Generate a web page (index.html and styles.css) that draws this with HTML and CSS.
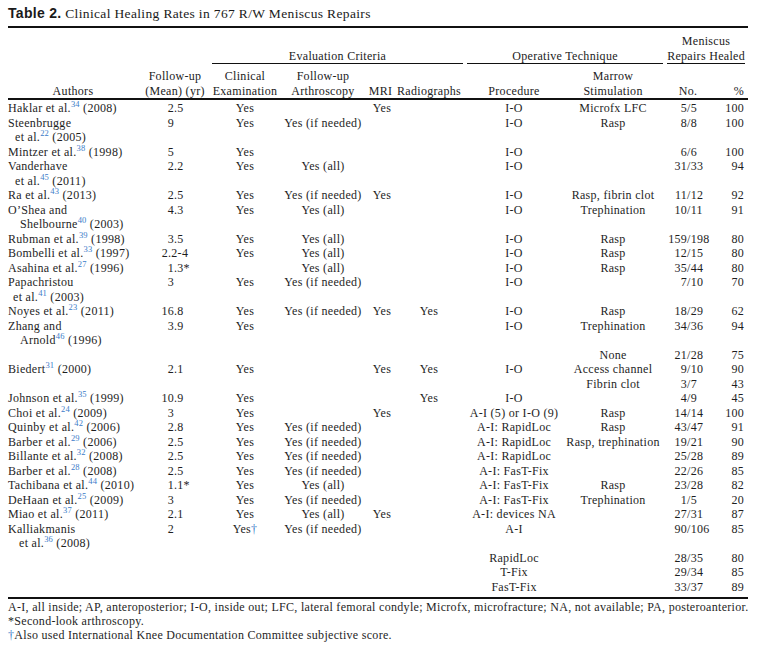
FILE: index.html
```html
<!DOCTYPE html>
<html lang="en">
<head>
<meta charset="utf-8">
<title>Table 2</title>
<link rel="stylesheet" href="styles.css">
</head>
<body>
<div class="page">
  <p class="title"><b>Table 2.</b> Clinical Healing Rates in 767 R/W Meniscus Repairs</p>
  <table class="tbl">
    <colgroup>
      <col class="c1"><col class="c2"><col class="c3"><col class="c4"><col class="c5">
      <col class="c6"><col class="c7"><col class="c8"><col class="c9"><col class="c10">
    </colgroup>
    <thead>
      <tr class="h1">
        <th></th>
        <th></th>
        <th colspan="4" class="grp"><div class="ul ul-eval">Evaluation Criteria</div></th>
        <th colspan="2" class="grp"><div class="ul ul-op">Operative Technique</div></th>
        <th colspan="2" class="grp"><div class="ul ul-men">Meniscus<br>Repairs Healed</div></th>
      </tr>
      <tr class="h2">
        <th>Authors</th>
        <th>Follow-up<br>(Mean) (yr)</th>
        <th>Clinical<br>Examination</th>
        <th>Follow-up<br>Arthroscopy</th>
        <th class="mri">MRI</th>
        <th>Radiographs</th>
        <th>Procedure</th>
        <th class="ms">Marrow<br>Stimulation</th>
        <th class="nohd">No.</th>
        <th class="pct">%</th>
      </tr>
    </thead>
    <tbody>
      <tr class="first"><td class="au">Haklar et al.<sup>34</sup> (2008)</td><td class="fu"><span class="int">2</span>.5</td><td>Yes</td><td></td><td>Yes</td><td></td><td>I-O</td><td class="ms">Microfx LFC</td><td class="no"><span class="num">5</span>/5</td><td class="pct">100</td></tr>
      <tr><td class="au">Steenbrugge<br><span class="i7">et al.<sup>22</sup> (2005)</span></td><td class="fu"><span class="int">9</span></td><td>Yes</td><td>Yes (if needed)</td><td></td><td></td><td>I-O</td><td class="ms">Rasp</td><td class="no"><span class="num">8</span>/8</td><td class="pct">100</td></tr>
      <tr><td class="au">Mintzer et al.<sup>38</sup> (1998)</td><td class="fu"><span class="int">5</span></td><td>Yes</td><td></td><td></td><td></td><td>I-O</td><td class="ms"></td><td class="no"><span class="num">6</span>/6</td><td class="pct">100</td></tr>
      <tr><td class="au">Vanderhave<br><span class="i7">et al.<sup>45</sup> (2011)</span></td><td class="fu"><span class="int">2</span>.2</td><td>Yes</td><td>Yes (all)</td><td></td><td></td><td>I-O</td><td class="ms"></td><td class="no"><span class="num">31</span>/33</td><td class="pct">94</td></tr>
      <tr><td class="au">Ra et al.<sup>43</sup> (2013)</td><td class="fu"><span class="int">2</span>.5</td><td>Yes</td><td>Yes (if needed)</td><td>Yes</td><td></td><td>I-O</td><td class="ms">Rasp, fibrin clot</td><td class="no"><span class="num">11</span>/12</td><td class="pct">92</td></tr>
      <tr><td class="au">O’Shea and<br><span class="i12">Shelbourne<sup>40</sup> (2003)</span></td><td class="fu"><span class="int">4</span>.3</td><td>Yes</td><td>Yes (all)</td><td></td><td></td><td>I-O</td><td class="ms">Trephination</td><td class="no"><span class="num">10</span>/11</td><td class="pct">91</td></tr>
      <tr><td class="au">Rubman et al.<sup>39</sup> (1998)</td><td class="fu"><span class="int">3</span>.5</td><td>Yes</td><td>Yes (all)</td><td></td><td></td><td>I-O</td><td class="ms">Rasp</td><td class="no"><span class="num">159</span>/198</td><td class="pct">80</td></tr>
      <tr><td class="au">Bombelli et al.<sup>33</sup> (1997)</td><td class="fu"><span class="int wide">2</span>.2-4</td><td>Yes</td><td>Yes (all)</td><td></td><td></td><td>I-O</td><td class="ms">Rasp</td><td class="no"><span class="num">12</span>/15</td><td class="pct">80</td></tr>
      <tr><td class="au">Asahina et al.<sup>27</sup> (1996)</td><td class="fu"><span class="int">1</span>.3*</td><td></td><td>Yes (all)</td><td></td><td></td><td>I-O</td><td class="ms">Rasp</td><td class="no"><span class="num">35</span>/44</td><td class="pct">80</td></tr>
      <tr><td class="au">Papachristou<br><span class="i5">et al.<sup>41</sup> (2003)</span></td><td class="fu"><span class="int">3</span></td><td>Yes</td><td>Yes (if needed)</td><td></td><td></td><td>I-O</td><td class="ms"></td><td class="no"><span class="num">7</span>/10</td><td class="pct">70</td></tr>
      <tr><td class="au">Noyes et al.<sup>23</sup> (2011)</td><td class="fu"><span class="int">16</span>.8</td><td>Yes</td><td>Yes (if needed)</td><td>Yes</td><td>Yes</td><td>I-O</td><td class="ms">Rasp</td><td class="no"><span class="num">18</span>/29</td><td class="pct">62</td></tr>
      <tr><td class="au">Zhang and<br><span class="i12">Arnold<sup>46</sup> (1996)</span></td><td class="fu"><span class="int">3</span>.9</td><td>Yes</td><td></td><td></td><td></td><td>I-O</td><td class="ms">Trephination</td><td class="no"><span class="num">34</span>/36</td><td class="pct">94</td></tr>
      <tr><td class="au"></td><td class="fu"></td><td></td><td></td><td></td><td></td><td></td><td class="ms">None</td><td class="no"><span class="num">21</span>/28</td><td class="pct">75</td></tr>
      <tr><td class="au">Biedert<sup>31</sup> (2000)</td><td class="fu"><span class="int">2</span>.1</td><td>Yes</td><td></td><td>Yes</td><td>Yes</td><td>I-O</td><td class="ms">Access channel</td><td class="no"><span class="num">9</span>/10</td><td class="pct">90</td></tr>
      <tr><td class="au"></td><td class="fu"></td><td></td><td></td><td></td><td></td><td></td><td class="ms">Fibrin clot</td><td class="no"><span class="num">3</span>/7</td><td class="pct">43</td></tr>
      <tr><td class="au">Johnson et al.<sup>35</sup> (1999)</td><td class="fu"><span class="int">10</span>.9</td><td>Yes</td><td></td><td></td><td>Yes</td><td>I-O</td><td class="ms"></td><td class="no"><span class="num">4</span>/9</td><td class="pct">45</td></tr>
      <tr><td class="au">Choi et al.<sup>24</sup> (2009)</td><td class="fu"><span class="int">3</span></td><td>Yes</td><td></td><td>Yes</td><td></td><td>A-I (5) or I-O (9)</td><td class="ms">Rasp</td><td class="no"><span class="num">14</span>/14</td><td class="pct">100</td></tr>
      <tr><td class="au">Quinby et al.<sup>42</sup> (2006)</td><td class="fu"><span class="int">2</span>.8</td><td>Yes</td><td>Yes (if needed)</td><td></td><td></td><td>A-I: RapidLoc</td><td class="ms">Rasp</td><td class="no"><span class="num">43</span>/47</td><td class="pct">91</td></tr>
      <tr><td class="au">Barber et al.<sup>29</sup> (2006)</td><td class="fu"><span class="int">2</span>.5</td><td>Yes</td><td>Yes (if needed)</td><td></td><td></td><td>A-I: RapidLoc</td><td class="ms">Rasp, trephination</td><td class="no"><span class="num">19</span>/21</td><td class="pct">90</td></tr>
      <tr><td class="au">Billante et al.<sup>32</sup> (2008)</td><td class="fu"><span class="int">2</span>.5</td><td>Yes</td><td>Yes (if needed)</td><td></td><td></td><td>A-I: RapidLoc</td><td class="ms"></td><td class="no"><span class="num">25</span>/28</td><td class="pct">89</td></tr>
      <tr><td class="au">Barber et al.<sup>28</sup> (2008)</td><td class="fu"><span class="int">2</span>.5</td><td>Yes</td><td>Yes (if needed)</td><td></td><td></td><td>A-I: FasT-Fix</td><td class="ms"></td><td class="no"><span class="num">22</span>/26</td><td class="pct">85</td></tr>
      <tr><td class="au">Tachibana et al.<sup>44</sup> (2010)</td><td class="fu"><span class="int">1</span>.1*</td><td>Yes</td><td>Yes (all)</td><td></td><td></td><td>A-I: FasT-Fix</td><td class="ms">Rasp</td><td class="no"><span class="num">23</span>/28</td><td class="pct">82</td></tr>
      <tr><td class="au">DeHaan et al.<sup>25</sup> (2009)</td><td class="fu"><span class="int">3</span></td><td>Yes</td><td>Yes (if needed)</td><td></td><td></td><td>A-I: FasT-Fix</td><td class="ms">Trephination</td><td class="no"><span class="num">1</span>/5</td><td class="pct">20</td></tr>
      <tr><td class="au">Miao et al.<sup>37</sup> (2011)</td><td class="fu"><span class="int">2</span>.1</td><td>Yes</td><td>Yes (all)</td><td>Yes</td><td></td><td>A-I: devices NA</td><td class="ms"></td><td class="no"><span class="num">27</span>/31</td><td class="pct">87</td></tr>
      <tr><td class="au">Kalliakmanis<br><span class="i11">et al.<sup>36</sup> (2008)</span></td><td class="fu"><span class="int">2</span></td><td>Yes<span class="dag">†</span></td><td>Yes (if needed)</td><td></td><td></td><td>A-I</td><td class="ms"></td><td class="no"><span class="num">90</span>/106</td><td class="pct">85</td></tr>
      <tr><td class="au"></td><td class="fu"></td><td></td><td></td><td></td><td></td><td>RapidLoc</td><td class="ms"></td><td class="no"><span class="num">28</span>/35</td><td class="pct">80</td></tr>
      <tr><td class="au"></td><td class="fu"></td><td></td><td></td><td></td><td></td><td>T-Fix</td><td class="ms"></td><td class="no"><span class="num">29</span>/34</td><td class="pct">85</td></tr>
      <tr class="last"><td class="au"></td><td class="fu"></td><td></td><td></td><td></td><td></td><td>FasT-Fix</td><td class="ms"></td><td class="no"><span class="num">33</span>/37</td><td class="pct">89</td></tr>
    </tbody>
  </table>
  <div class="notes">
    <p>A-I, all inside; AP, anteroposterior; I-O, inside out; LFC, lateral femoral condyle; Microfx, microfracture; NA, not available; PA, posteroanterior.</p>
    <p>*Second-look arthroscopy.</p>
    <p><span class="dag">†</span>Also used International Knee Documentation Committee subjective score.</p>
  </div>
</div>
</body>
</html>
```
FILE: styles.css
```css
html, body {
  margin: 0;
  padding: 0;
  background: #ffffff;
}

body {
  font-family: "Liberation Serif", "Times New Roman", serif;
  color: #1e1e1e;
}

.page {
  width: 740px;
  padding: 5px 0 0 8px;
}

.title {
  margin: 0 0 4px;
  font-size: 13.5px;
  line-height: 16px;
  letter-spacing: 0.35px;
  color: #1a1a1a;
}

.title b {
  font-family: "Liberation Sans", Arial, sans-serif;
  font-weight: bold;
  font-size: 14px;
  letter-spacing: 0.3px;
}

.tbl {
  width: 740px;
  table-layout: fixed;
  border-collapse: separate;
  border-spacing: 0;
  border-top: 2px solid #111;
  border-bottom: 2px solid #111;
  font-size: 12px;
  line-height: 14.5px;
  letter-spacing: 0.3px;
}

.c1 { width: 130px; }
.c2 { width: 74px; }
.c3 { width: 66px; }
.c4 { width: 90px; }
.c5 { width: 28px; }
.c6 { width: 66px; }
.c7 { width: 104px; }
.c8 { width: 99px; }
.c9 { width: 53px; }
.c10 { width: 30px; }

.tbl th,
.tbl td {
  padding: 0;
  font-weight: normal;
  white-space: nowrap;
  text-align: center;
  vertical-align: top;
}

.tbl thead th {
  vertical-align: bottom;
  color: #222;
}

.h1 th {
  padding-top: 6px;
}

.h2 th {
  padding-top: 5px;
  border-bottom: 2px solid #111;
}

.tbl .mri {
  padding-right: 3px;
}

.ul {
  border-bottom: 1px solid #111;
}

.ul-eval { margin: 0 -1px 0 0; }
.ul-op { margin: 0 2px 0 5px; }
.ul-men { margin: 0 3px 0 2px; }

.tbl .ms { padding-right: 5px; }
.tbl .nohd { padding-right: 7px; }

.tbl .au {
  text-align: left;
}

.i5 { padding-left: 5px; }
.i7 { padding-left: 7px; }
.i11 { padding-left: 11px; }
.i12 { padding-left: 12px; }

.tbl .fu {
  text-align: left;
}

.int {
  display: inline-block;
  width: 36px;
  text-align: right;
}

.int.wide {
  width: 30px;
}

.tbl .no {
  text-align: left;
}

.num {
  display: inline-block;
  width: 22px;
  text-align: right;
}

.tbl .pct {
  text-align: right;
  padding-right: 4px;
}

.first td {
  padding-top: 1px;
}

.last td {
  padding-bottom: 3px;
}

sup {
  font-size: 8.5px;
  line-height: 0;
  vertical-align: 5px;
  color: #3b7cc9;
  letter-spacing: 0.2px;
}

.dag {
  color: #3b7cc9;
}

.notes {
  padding-top: 1px;
  font-size: 12px;
  line-height: 14px;
  letter-spacing: 0.3px;
  color: #1e1e1e;
}

.notes p {
  margin: 0;
  white-space: nowrap;
}
```
